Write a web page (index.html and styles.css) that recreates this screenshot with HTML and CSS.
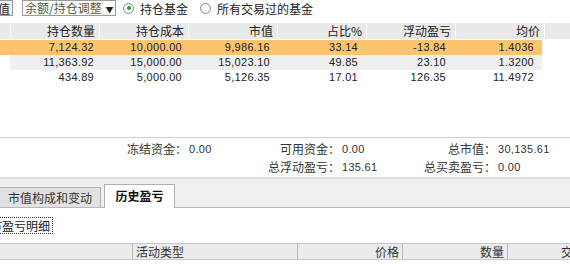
FILE: index.html
```html
<!DOCTYPE html>
<html lang="zh-CN">

<head>
    <meta charset="UTF-8">
    <title>持仓基金</title>
    <link rel="stylesheet" href="styles.css">
</head>

<body>
    <div class="toolbar">
        <button class="btn cut">净值</button>
        <div class="select">余额/持仓调整 <span class="arrow">▼</span></div>
        <label class="radio checked"><span class="dot"></span>持仓基金</label>
        <label class="radio"><span class="dot"></span>所有交易过的基金</label>
    </div>

    <div class="holdings">
        <div class="head">
            <div class="cell first"></div>
            <div class="cell">持仓数量</div>
            <div class="cell">持仓成本</div>
            <div class="cell">市值</div>
            <div class="cell">占比%</div>
            <div class="cell">浮动盈亏</div>
            <div class="cell">均价</div>
            <div class="cell last"></div>
        </div>
        <div class="row selected">
            <div class="cell first"></div>
            <div class="cell num">7,124.32</div>
            <div class="cell num">10,000.00</div>
            <div class="cell num">9,986.16</div>
            <div class="cell num">33.14</div>
            <div class="cell num">-13.84</div>
            <div class="cell num">1.4036</div>
        </div>
        <div class="row alt">
            <div class="cell first"></div>
            <div class="cell num">11,363.92</div>
            <div class="cell num">15,000.00</div>
            <div class="cell num">15,023.10</div>
            <div class="cell num">49.85</div>
            <div class="cell num">23.10</div>
            <div class="cell num">1.3200</div>
        </div>
        <div class="row">
            <div class="cell first"></div>
            <div class="cell num">434.89</div>
            <div class="cell num">5,000.00</div>
            <div class="cell num">5,126.35</div>
            <div class="cell num">17.01</div>
            <div class="cell num">126.35</div>
            <div class="cell num">11.4972</div>
        </div>
    </div>

    <div class="summary">
        <span class="label">冻结资金：</span><span class="num">0.00</span>
        <span class="label">可用资金：</span><span class="num">0.00</span>
        <span class="label">总市值：</span><span class="num">30,135.61</span>
        <span></span><span></span>
        <span class="label">总浮动盈亏：</span><span class="num">135.61</span>
        <span class="label">总买卖盈亏：</span><span class="num">0.00</span>
    </div>

    <div class="tabs">
        <div class="tab">市值构成和变动</div>
        <div class="tab active">历史盈亏</div>
    </div>

    <div class="panel">
        <button class="btn detail">市盈亏明细</button>
        <div class="history-head">
            <div class="hcell"></div>
            <div class="hcell left">活动类型</div>
            <div class="hcell">价格</div>
            <div class="hcell">数量</div>
            <div class="hcell">交易金额</div>
        </div>
    </div>
</body>

</html>
```

FILE: styles.css
```css
body {
    margin: 0;
    width: 570px;
    height: 271px;
    overflow: hidden;
    background-color: white;
    color: #222;
    font-family: 'Noto Sans CJK SC', sans-serif;
    font-size: 12px;
}

.num {
    font-family: 'Liberation Sans', sans-serif;
    font-size: 11px;
    letter-spacing: 0.3px;
}

/* toolbar */
.toolbar {
    display: flex;
    align-items: center;
    height: 16px;
}

.btn {
    font-family: 'Noto Sans CJK SC', sans-serif;
    font-size: 12px;
    color: #222;
    background-color: #f4f4f4;
    border: 1px solid #9a9a9a;
    padding: 0 2px;
    line-height: 13px;
}

.btn.cut {
    width: 40px;
    height: 16px;
    margin-left: -27px;
    text-align: right;
}

.select {
    margin-left: 9px;
    width: 90px;
    height: 14px;
    line-height: 14px;
    border: 1px solid #9a9a9a;
    padding-left: 2px;
    color: #5a5a3c;
    white-space: nowrap;
}

.select .arrow {
    font-size: 8px;
    color: #222;
    margin-left: 1px;
}

.radio {
    display: flex;
    align-items: center;
    gap: 6px;
    margin-left: 7px;
    white-space: nowrap;
}

.radio + .radio {
    margin-left: 12px;
}

.radio .dot {
    width: 9px;
    height: 9px;
    border: 1px solid #7a8c9c;
    border-radius: 50%;
    background-color: #fafafa;
    display: flex;
    align-items: center;
    justify-content: center;
}

.radio.checked .dot::after {
    content: '';
    width: 4px;
    height: 4px;
    border-radius: 50%;
    background-color: #2f9a3a;
}

/* holdings table */
.holdings {
    margin-top: 7px;
    height: 62px;
}

.head,
.row {
    display: flex;
}

.head {
    height: 16px;
    line-height: 16px;
    gap: 1px;
    margin-bottom: 1px;
}

.head .cell {
    background-color: #e9e9e9;
}

.row {
    height: 15px;
    line-height: 15px;
    width: 542px;
}

.cell {
    width: 88px;
    text-align: right;
    padding-right: 4px;
    box-sizing: border-box;
    white-space: nowrap;
}

.cell.first {
    width: 10px;
}

.cell.last {
    flex: 1;
}

.row.selected {
    background-color: #fcc56d;
}

.row.alt {
    background-color: #efefef;
}

.row.alt .cell.first {
    background-color: white;
}

/* summary */
.summary {
    margin-top: 52px;
    border-top: 1px solid #cfcfcf;
    padding-top: 2px;
    display: grid;
    grid-template-columns: 187px 66px 87px 70px 86px 74px;
    grid-auto-rows: 18px;
    line-height: 18px;
    color: #333;
    height: 37px;
}

.summary .label {
    text-align: right;
}

.summary .num {
    padding-left: 2px;
}

/* tabs */
.tabs {
    display: flex;
    align-items: flex-end;
    height: 28px;
    background-color: #f0f0f0;
    border-top: 2px solid #dedede;
    border-bottom: 1px solid #b8b8b8;
    gap: 3px;
}

.tab {
    width: 100px;
    height: 19px;
    line-height: 19px;
    text-align: center;
    background-color: #e2e2e2;
    border: 1px solid #b0b0b0;
    border-left: none;
    border-bottom: none;
    color: #333;
}

.tab.active {
    width: 69px;
    height: 23px;
    line-height: 22px;
    background-color: white;
    border-left: 1px solid #b0b0b0;
    font-weight: bold;
    margin-bottom: -1px;
    color: #111;
}

/* history panel */
.panel {
    padding-top: 9px;
}

.btn.detail {
    height: 17px;
    margin-left: -13px;
    padding: 0 2px;
    background-color: white;
    border: 1px dotted #333;
    line-height: 15px;
}

.history-head {
    display: flex;
    margin-top: 9px;
    height: 15px;
    line-height: 15px;
    width: 640px;
    background-color: #ebebeb;
    border-top: 1px solid #c8c8c8;
    border-bottom: 1px solid #c8c8c8;
    color: #333;
}

.hcell {
    width: 105px;
    text-align: right;
    padding-right: 3px;
    box-sizing: border-box;
    border-right: 1px solid #b8b8b8;
}

.hcell:first-child {
    width: 133px;
}

.hcell.left {
    width: 165px;
    text-align: left;
    padding-left: 3px;
}
```
